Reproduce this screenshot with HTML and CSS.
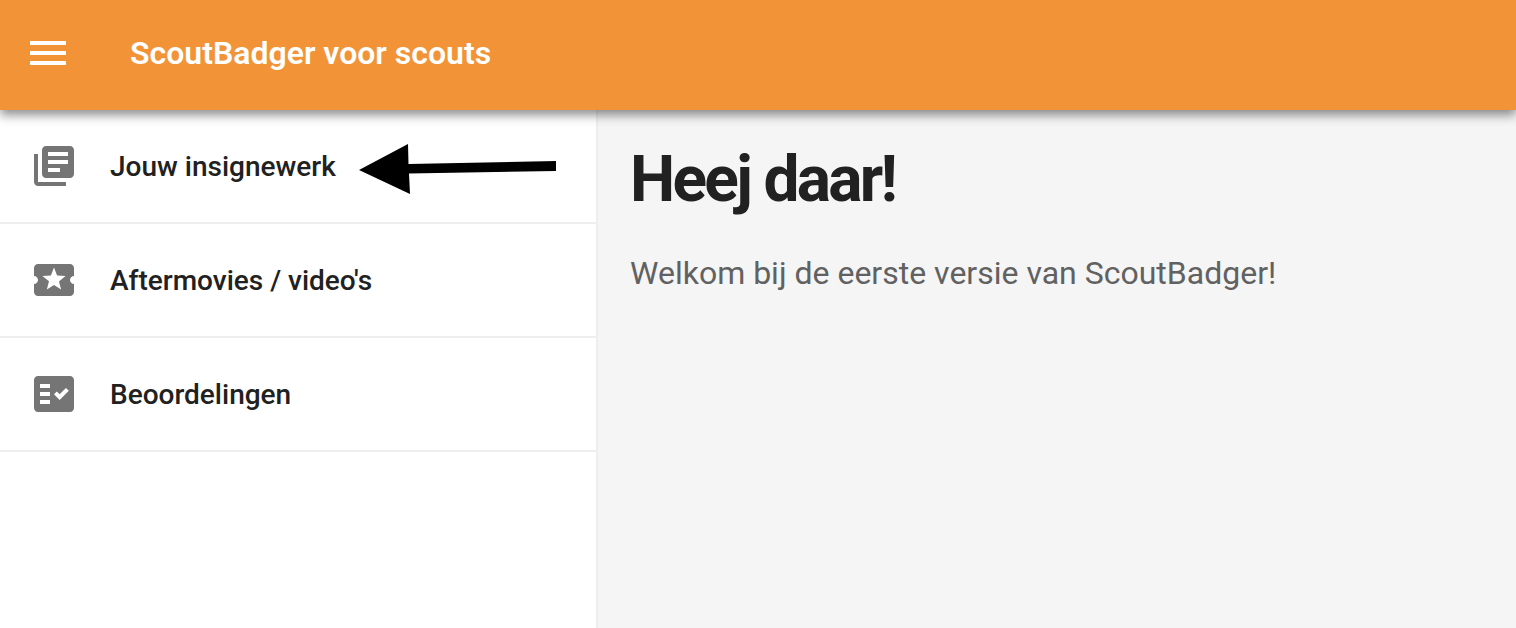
FILE: index.html
```html
<!DOCTYPE html>
<html lang="nl">
<head>
  <meta charset="UTF-8">
  <title>ScoutBadger voor scouts</title>
  <link rel="stylesheet" href="styles.css">
</head>
<body>

<header class="topbar">
  <svg class="menu-icon" viewBox="0 0 24 24"><path d="M3 18h18v-2H3v2zm0-5h18v-2H3v2zm0-7v2h18V6H3z"/></svg>
  <h2 class="topbar-title">ScoutBadger voor scouts</h2>
</header>

<div class="layout">
  <nav class="sidebar">
    <a class="nav-item">
      <svg class="nav-icon" viewBox="0 0 24 24"><path d="M4 6H2v14c0 1.1.9 2 2 2h14v-2H4V6zm16-4H8c-1.1 0-2 .9-2 2v12c0 1.1.9 2 2 2h12c1.1 0 2-.9 2-2V4c0-1.1-.9-2-2-2zm-1 9H9V9h10v2zm-4 4H9v-2h6v2zm4-8H9V5h10v2z"/></svg>
      <span>Jouw insignewerk</span>
    </a>
    <a class="nav-item">
      <svg class="nav-icon" viewBox="0 0 24 24"><path d="M20 12c0-1.1.9-2 2-2V6c0-1.1-.9-2-2-2H4c-1.1 0-1.99.9-1.99 2v4c1.1 0 1.99.9 1.99 2s-.89 2-2 2v4c0 1.1.9 2 2 2h16c1.1 0 2-.9 2-2v-4c-1.1 0-2-.9-2-2zm-4.42 4.8L12 14.5l-3.58 2.3 1.08-4.12-3.29-2.69 4.24-.25L12 5.8l1.54 3.95 4.24.25-3.29 2.69 1.09 4.11z"/></svg>
      <span>Aftermovies / video's</span>
    </a>
    <a class="nav-item">
      <svg class="nav-icon" viewBox="0 0 24 24"><path d="M20 3H4C2.9 3 2 3.9 2 5v14c0 1.1.9 2 2 2h16c1.1 0 2-.9 2-2V5c0-1.1-.9-2-2-2zM10 17H5v-2h5v2zm0-4H5v-2h5v2zm0-4H5V7h5v2zm4.82 6L12 12.16l1.41-1.41 1.41 1.42L17.99 9l1.42 1.42L14.82 15z"/></svg>
      <span>Beoordelingen</span>
    </a>
  </nav>

  <main class="content">
    <h1>Heej daar!</h1>
    <p>Welkom bij de eerste versie van ScoutBadger!</p>
  </main>
</div>

<!-- annotation drawn on top of the screenshot -->
<svg class="arrow" viewBox="0 0 200 52"><polygon points="1,26 50,0 50.5,20 198,17 198,27 51,29.5 52,50"/></svg>

</body>
</html>
```

FILE: styles.css
```css
html, body { height: 100%; }
body {
  margin: 0;
  font-family: Roboto, sans-serif;
  background-color: #f5f5f5;
  color: #212121;
  overflow: hidden;
}
.topbar {
  position: relative;
  z-index: 2;
  display: flex;
  align-items: center;
  height: 110px;
  padding-left: 24px;
  background-color: #f29337;
  box-shadow: 0 5px 10px rgba(0, 0, 0, 0.45);
  box-sizing: border-box;
}
.menu-icon {
  width: 48px;
  height: 48px;
  margin-top: -4px;
  fill: #fff;
}
.topbar-title {
  margin: -4px 0 0 58px;
  font-size: 32px;
  font-weight: 600;
  color: #fff;
}
.layout {
  display: flex;
  height: calc(100vh - 110px);
}
.sidebar {
  width: 598px;
  flex: none;
  box-sizing: border-box;
  background-color: #fff;
  border-right: 2px solid #eeeeee;
}
.nav-item {
  display: flex;
  align-items: center;
  height: 114px;
  padding-left: 30px;
  box-sizing: border-box;
  border-bottom: 2px solid #eeeeee;
  font-size: 28px;
  font-weight: 460;
}
.nav-icon {
  width: 48px;
  height: 48px;
  margin-right: 32px;
  fill: #757575;
  flex: none;
}
.content {
  flex: 1;
  padding: 32px;
}
h1 {
  margin: 0;
  font-size: 64px;
  font-weight: 700;
  letter-spacing: -2.7px;
  line-height: 76px;
}
.content p {
  margin: 33px 0 0;
  font-size: 32px;
  line-height: 44px;
  color: #616161;
}
.arrow {
  position: absolute;
  left: 358px;
  top: 144px;
  width: 200px;
  height: 52px;
  fill: #000;
}
```
